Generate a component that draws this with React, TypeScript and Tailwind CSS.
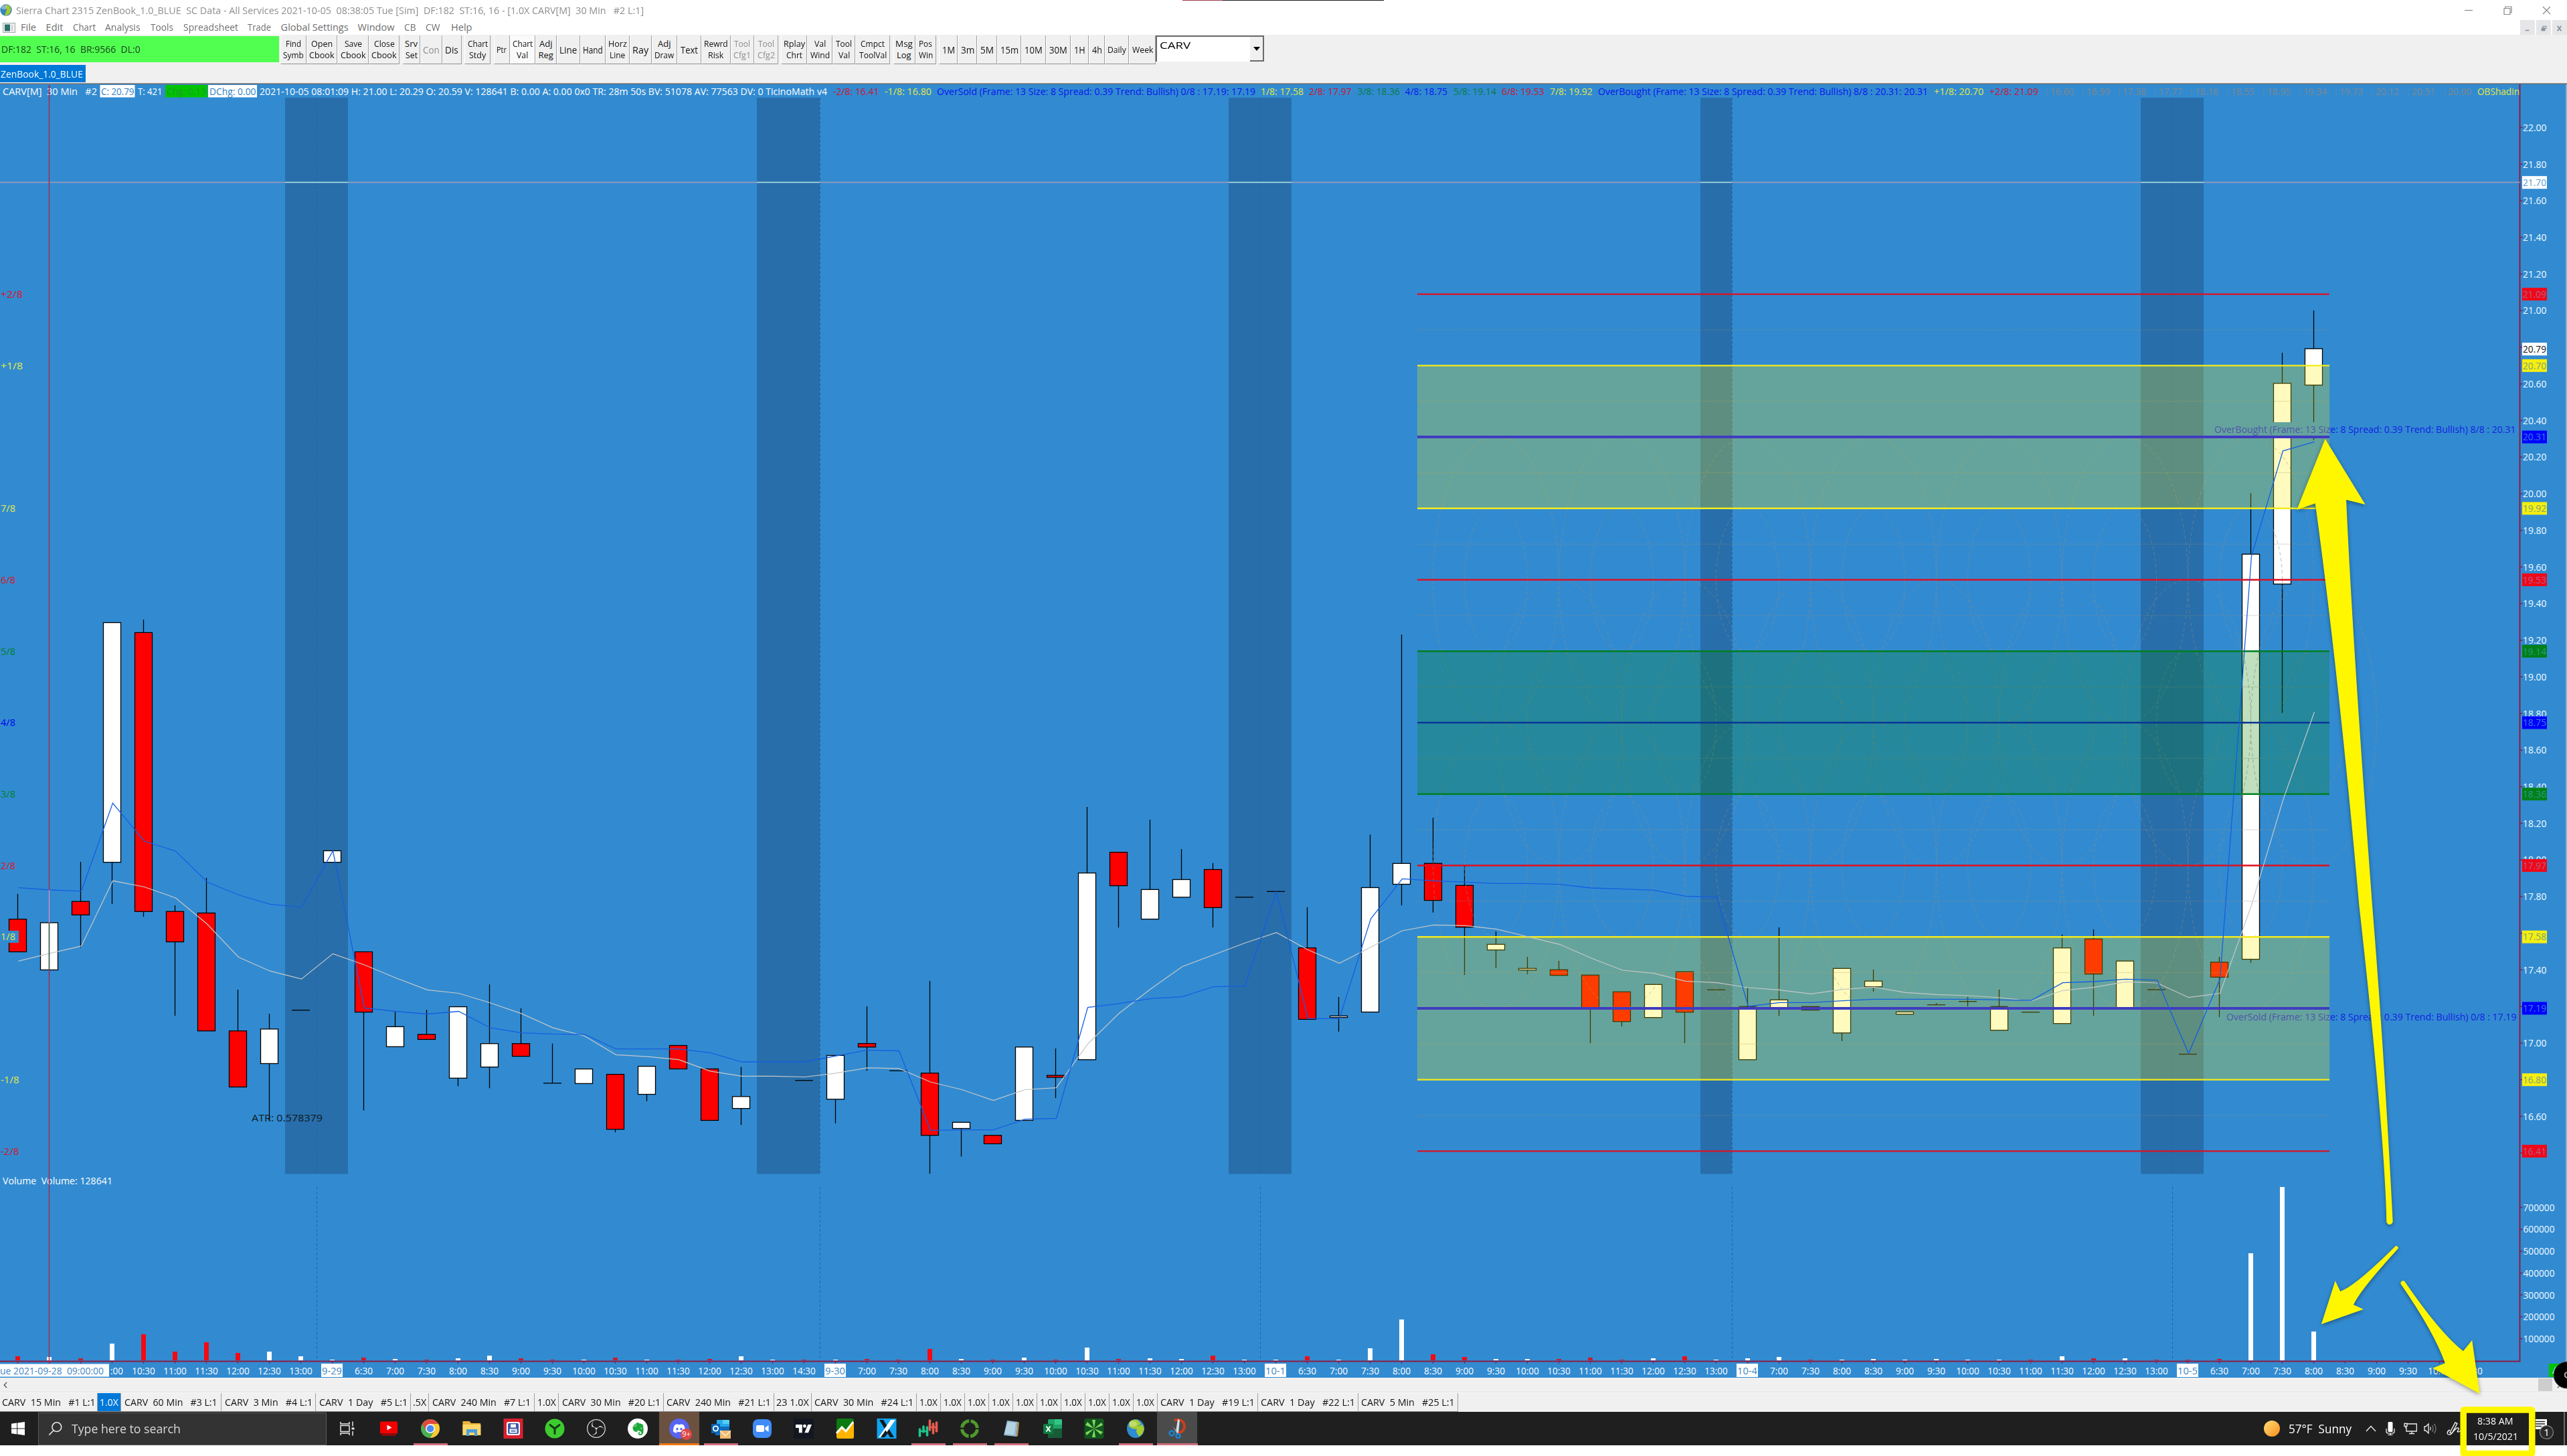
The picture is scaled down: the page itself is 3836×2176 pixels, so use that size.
import React, { useLayoutEffect, useRef, useState } from "react";
import { SiDiscord, SiEvernote, SiObsstudio, SiTradingview } from "react-icons/si";

/* ---------- text squeezed to a given width ---------- */
function Fit({ w, children, className = "" }: { w: number; children: string; className?: string }) {
  const ref = useRef<HTMLSpanElement>(null);
  const [scale, setScale] = useState(1);
  useLayoutEffect(() => {
    if (ref.current) setScale(w / ref.current.offsetWidth);
  }, [w, children]);
  return (
    <span className={`inline-block shrink-0 whitespace-pre ${className}`} style={{ width: w }}>
      <span ref={ref} className="inline-block origin-left" style={{ transform: `scaleX(${scale})` }}>
        {children}
      </span>
    </span>
  );
}

/* ---------- chart geometry ---------- */
const bx = (i: number) => 26.5 + 47 * i;
const py = (p: number) => 409.5 + (21.2 - p) * 273.67;
const BG = "#328bd1";
const X0 = 2118;
const X1 = 3481;

// bar index, high, body top, body bottom, low, kind (w = up, r = down, d = flat)
type Candle = [number, number, number, number, number, "w" | "r" | "d"];
const candles: Candle[] = [
  [0, 1336, 1373.7, 1422.5, 1422.5, "r"], [1, 1379, 1379, 1449.5, 1449.5, "w"], [2, 1288, 1347.3, 1367.4, 1416, "r"],
  [3, 930.5, 930.5, 1288.7, 1351, "w"], [4, 926, 945.4, 1362.2, 1370, "r"], [5, 1353, 1362.2, 1407.6, 1518, "r"],
  [6, 1312, 1364.5, 1540.7, 1540.7, "r"], [7, 1479, 1540.7, 1624.5, 1624.5, "r"], [8, 1515, 1537.9, 1589.5, 1675, "w"],
  [9, 1509.7, 1509.7, 1509.7, 1509.7, "d"], [10, 1271.5, 1271.5, 1288.7, 1288.7, "w"], [11, 1422.5, 1422.5, 1512.6, 1659.6, "r"],
  [12, 1512, 1534.4, 1564.3, 1564.3, "w"], [13, 1509, 1545.9, 1553.4, 1553.4, "r"], [14, 1504.6, 1504.6, 1611.3, 1623.4, "w"],
  [15, 1471.3, 1559.7, 1594.7, 1626.3, "w"], [16, 1507, 1559.7, 1578.6, 1578.6, "r"], [17, 1559.7, 1618.8, 1618.8, 1618.8, "d"],
  [18, 1597.6, 1597.6, 1619.4, 1619.4, "w"], [19, 1605.6, 1605.6, 1687.7, 1692.3, "r"], [20, 1593.6, 1593.6, 1635.5, 1645.8, "w"],
  [21, 1562.5, 1562.5, 1597.5, 1597.5, "r"], [22, 1597.5, 1597.5, 1674.4, 1674.4, "r"], [23, 1594.6, 1638.8, 1656.6, 1681.3, "w"],
  [25, 1614.7, 1614.7, 1614.7, 1614.7, "d"], [26, 1577.4, 1577.4, 1642.8, 1679, "w"], [27, 1504, 1559.6, 1564.8, 1600.3, "r"],
  [28, 1600.3, 1600.3, 1600.3, 1600.3, "d"], [29, 1466, 1603.8, 1696.8, 1754.2, "r"], [30, 1677.3, 1677.3, 1686.5, 1728.4, "w"],
  [31, 1696.8, 1696.8, 1709.4, 1709.4, "r"], [32, 1564.8, 1564.8, 1674.4, 1674.4, "w"], [33, 1567, 1607.2, 1610.1, 1641, "r"],
  [34, 1206, 1304.7, 1583.7, 1583.7, "w"], [35, 1273.7, 1273.7, 1323.7, 1386.2, "r"], [36, 1225, 1329.4, 1373.6, 1373.6, "w"],
  [37, 1269, 1314.5, 1340.9, 1340.9, "w"], [38, 1289.8, 1299.5, 1356.4, 1386.2, "r"], [39, 1340.9, 1340.9, 1340.9, 1340.9, "d"],
  [40, 1332.3, 1332.3, 1332.3, 1332.3, "d"], [41, 1355.8, 1416.6, 1523.4, 1523.4, "r"], [42, 1490, 1518.3, 1520.6, 1541.8, "w"],
  [43, 1247.3, 1326.5, 1512.5, 1512.5, "w"], [44, 948.2, 1290.4, 1321.5, 1353, "w"], [45, 1222, 1290.3, 1345.7, 1363.7, "r"],
  [46, 1293.3, 1323.3, 1385.7, 1457, "r"], [47, 1392, 1411.3, 1419.7, 1447, "w"], [48, 1430, 1447.3, 1449.7, 1456, "w"],
  [49, 1436, 1449.3, 1457.7, 1457.7, "r"], [50, 1457.3, 1457.3, 1506, 1559, "r"], [51, 1482.3, 1482.3, 1526.7, 1534, "r"],
  [52, 1471.3, 1471.3, 1520.7, 1520.7, "w"], [53, 1452.3, 1452.3, 1512.7, 1559, "r"], [54, 1479.3, 1479.3, 1479.3, 1479.3, "d"],
  [55, 1476.7, 1504.3, 1583.7, 1583.7, "w"], [56, 1386, 1494.3, 1506, 1518, "w"], [57, 1504, 1504.3, 1509.5, 1509.5, "r"],
  [58, 1447.3, 1447.3, 1543.7, 1556, "w"], [59, 1449, 1466.3, 1474.7, 1482, "w"], [60, 1512.3, 1512.3, 1515.7, 1515.7, "w"],
  [61, 1499, 1501.7, 1501.7, 1501.7, "d"], [62, 1490, 1496.7, 1496.7, 1504, "d"], [63, 1479, 1504.3, 1539.7, 1539.7, "w"],
  [64, 1512.7, 1512.7, 1512.7, 1512.7, "d"], [65, 1396.7, 1416.7, 1529.7, 1529.7, "w"], [66, 1389, 1403.3, 1455.7, 1518, "r"],
  [67, 1436.3, 1436.3, 1506, 1506, "w"], [68, 1479.1, 1479.1, 1479.1, 1479.1, "d"], [69, 1575.5, 1575.5, 1575.5, 1575.5, "d"],
  [70, 1430, 1438, 1460.4, 1520.2, "r"], [71, 737, 828.2, 1433.6, 1439, "w"], [72, 527.3, 572.9, 872.9, 1065.7, "w"],
  [73, 464, 521.1, 575.5, 657.7, "w"],
];

const fastAvg = [
  1326.6, 1330, 1331.8, 1200.3, 1257, 1272, 1318, 1337.5, 1351.3, 1355.9, 1271.5, 1506.3, 1511.5, 1515.5, 1511.5, 1536, 1543.6,
  1545.3, 1545.9, 1567.7, 1567.7, 1567.6, 1573.4, 1587, 1587, 1587, 1578, 1569.3, 1570.5, 1689.3, 1688.7, 1688.7, 1672.7, 1671.5,
  1505.6, 1499.9, 1492.4, 1489.6, 1474.6, 1473.5, 1332.8, 1522.3, 1522.3, 1373, 1313.3, 1316.3, 1318.3, 1320.3, 1320.3, 1321.7,
  1327, 1328.7, 1330.3, 1339.3, 1340.7, 1504, 1498.3, 1498.3, 1495.7, 1493.3, 1493.3, 1493.3, 1493.3, 1494.3, 1495, 1468.7, 1467,
  1463.3, 1464.8, 1574.6, 1463, 831, 673.8, 660.4,
];
const slowAvg = [
  1436.3, 1424.8, 1413.9, 1316.3, 1325.5, 1342, 1381, 1430.5, 1451.2, 1463.2, 1425.4, 1442, 1461.5, 1479.3, 1484.5, 1498.8, 1514.9,
  1536.1, 1548.2, 1576.3, 1579.2, 1583.7, 1600.9, 1608.4, 1608.4, 1609.5, 1603.8, 1595.8, 1596.9, 1617, 1628.5, 1644.5, 1628.5,
  1625.6, 1560.2, 1514.2, 1478.1, 1444.8, 1427, 1409.2, 1393.7, 1419.5, 1439.6, 1415.5, 1391, 1382.3, 1383.3, 1388.7, 1400, 1411.3,
  1431.7, 1450, 1454.7, 1466.3, 1468.7, 1476, 1479.7, 1485.3, 1478.7, 1475.3, 1483.3, 1486.3, 1488, 1491, 1496, 1480.3, 1475.3,
  1467.3, 1469, 1490.7, 1484.5, 1353, 1196, 1064,
];
const line = (ys: number[]) => ys.map((y, i) => `${bx(i) + 1},${y}`).join(" ");

// height of each volume bar in pixels; a minus sign marks a down bar
const volumes = [
  -6, 5, -3, 25, -39, -13, -27, -11, 13, 6, 1, -4, 2, -1, 3, 7, -3, -1, 1, -4, 1, -1, -2, 6, 1, -1, 1, -2, -1, -17, 2, -1, 4, -1,
  19, -2, 3, 2, -7, 1, 1, -6, 1, 18, 61, -9, -5, 2, 2, -2, -4, -1, 3, -6, 1, 3, 5, -1, 1, 2, 1, 2, 1, 1, -1, 6, -3, 3, -1, -1, -2,
  160, 259, 43,
];

const times = (
  ":00 10:30 11:00 11:30 12:00 12:30 13:00 9-29 6:30 7:00 7:30 8:00 8:30 9:00 9:30 10:00 10:30 11:00 11:30 12:00 12:30 13:00 14:30 " +
  "9-30 7:00 7:30 8:00 8:30 9:00 9:30 10:00 10:30 11:00 11:30 12:00 12:30 13:00 10-1 6:30 7:00 7:30 8:00 8:30 9:00 9:30 10:00 10:30 " +
  "11:00 11:30 12:00 12:30 13:00 10-4 7:00 7:30 8:00 8:30 9:00 9:30 10:00 10:30 11:00 11:30 12:00 12:30 13:00 10-5 6:30 7:00 7:30 8:00 " +
  "8:30 9:00 9:30 10:00 10:30"
).split(" ");

const RED = "#d2112c";
const YEL = "#e6e83c";
const GRN = "#0a7a45";
const BLU = "#0a14ee";
const info: [string, number, number, string][] = [
  ["CARV[M]  30 Min   #2", 4, 145, "#fff"], ["C: 20.79", 151, 200.5, "#2f7fc4"], ["T: 421", 206, 242.5, "#fff"],
  ["Chg: 0.13", 249, 308, "#1d9a2d"], ["DChg: 0.00", 313, 382.5, "#2f7fc4"],
  ["2021-10-05 08:01:09 H: 21.00 L: 20.29 O: 20.59 V: 128641 B: 0.00 A: 0.00 0x0 TR: 28m 50s BV: 51078 AV: 77563 DV: 0 TicinoMath v4", 388, 1236, "#fff"],
  ["-2/8: 16.41", 1245, 1313.5, RED], ["-1/8: 16.80", 1322, 1392, YEL],
  ["OverSold (Frame: 13 Size: 8 Spread: 0.39 Trend: Bullish) 0/8 : 17.19: 17.19", 1400, 1876, BLU],
  ["1/8: 17.58", 1884, 1948, YEL], ["2/8: 17.97", 1956, 2019.6, RED], ["3/8: 18.36", 2028.6, 2092, GRN],
  ["4/8: 18.75", 2099.6, 2163, BLU], ["5/8: 19.14", 2172, 2236, GRN], ["6/8: 19.53", 2244, 2307.8, RED], ["7/8: 19.92", 2316, 2379.6, YEL],
  ["OverBought (Frame: 13 Size: 8 Spread: 0.39 Trend: Bullish) 8/8 : 20.31: 20.31", 2388, 2881, BLU],
  ["+1/8: 20.70", 2890, 2964.3, YEL], ["+2/8: 21.09", 2973, 3046, RED],
  ...["16.60", "16.99", "17.38", "17.77", "18.16", "18.55", "18.95", "19.34", "19.73", "20.12", "20.51", "20.90"].map(
    (t, i): [string, number, number, string] => [": " + t, 3056.4 + 54 * i, 3099 + 54 * i, "#80868c"],
  ),
  ["OBShadin", 3702, 3765, YEL],
];

const levels: [string, number, string][] = [
  ["+2/8", 21.09, "#e00f1e"], ["+1/8", 20.7, "#f2ea20"], ["7/8", 19.92, "#f2ea20"], ["6/8", 19.53, "#d81226"], ["5/8", 19.14, "#008028"],
  ["4/8", 18.75, "#0a1ec8"], ["3/8", 18.36, "#008028"], ["2/8", 17.97, "#e00f1e"], ["1/8", 17.58, "#f2ea20"], ["-1/8", 16.8, "#f2ea20"],
  ["-2/8", 16.41, "#d81226"],
];
const boxes: [number, string, string][] = [
  [21.7, "#ffffff", "#5a9bd0"], [21.09, "#f00818", "#b0608c"], [20.79, "#ffffff", "#111111"], [20.7, "#f6ee10", "#74a37c"],
  [20.31, "#0000ff", "#3a7fe0"], [19.92, "#f6ee10", "#74a37c"], [19.53, "#f00818", "#b0608c"], [19.14, "#008018", "#2b9a86"],
  [18.75, "#0000ff", "#3a7fe0"], [18.36, "#008018", "#2b9a86"], [17.97, "#f00818", "#b0608c"], [17.58, "#f6ee10", "#74a37c"],
  [17.19, "#0000ff", "#3a7fe0"], [16.8, "#f6ee10", "#74a37c"], [16.41, "#f00818", "#b0608c"],
];
// grid prices whose label lies wholly behind a marker
const hidden = ["20.80", "17.60", "17.20", "16.80"];

function T({ x, y, w, fill, children, anchor = "start", size = 15 }: { x: number; y: number; w: number; fill: string; children: string; anchor?: "start" | "middle"; size?: number }) {
  return (
    <text x={x} y={y + size * 0.35} textLength={w} lengthAdjust="spacingAndGlyphs" fill={fill} textAnchor={anchor} fontSize={size} className="whitespace-pre">
      {children}
    </text>
  );
}

function Chart() {
  const bands: [number, number][] = [[426, 520], [1131, 1225], [1836, 1930], [2541, 2588], [3199, 3293]];
  const sessions = [473, 1225, 1883, 2588, 3246];
  return (
    <svg viewBox="0 126 3836 1933" width={3836} height={1933} className="block shrink-0">
      <rect x={0} y={126} width={3836} height={1933} fill={BG} />
      {bands.map(([a, b]) => (
        <rect key={a} x={a} y={146} width={b - a} height={1608.5} fill="#286eaa" />
      ))}
      {sessions.map((x) => (
        <g key={x} stroke="#1f66a4" strokeWidth={1} strokeDasharray="4 3">
          <line x1={x + 0.5} x2={x + 0.5} y1={146} y2={1754} />
          <line x1={x + 0.5} x2={x + 0.5} y1={1774} y2={2033} />
        </g>
      ))}

      {/* candles */}
      {candles.map(([i, h, t, b, l, k]) => (
        <g key={i} stroke="#000" strokeWidth={1.3}>
          {h < t && <line x1={bx(i)} x2={bx(i)} y1={h} y2={t} />}
          {l > b && <line x1={bx(i)} x2={bx(i)} y1={b} y2={l} />}
          {k === "d" ? (
            <line x1={bx(i) - 13.5} x2={bx(i) + 13.5} y1={t} y2={t} />
          ) : (
            <rect x={bx(i) - 13} y={t} width={26} height={b - t} fill={k === "w" ? "#fff" : "#ff0000"} />
          )}
        </g>
      ))}

      {/* mid levels and arcs */}
      <g stroke="#8a8a80" strokeWidth={1} fill="none">
        {Array.from({ length: 12 }, (_, i) => (
          <line key={i} x1={X0} x2={X1} y1={py(16.605 + 0.39 * i)} y2={py(16.605 + 0.39 * i)} strokeDasharray="1 1" opacity={0.7} />
        ))}
        <g opacity={0.6} strokeDasharray="5 4">
          {[47, 51, 55, 59, 63, 67, 71].map((i) => (
            <g key={i}>
              {[19.53, 17.97].map((p) => (
                <g key={p}>
                  <ellipse cx={bx(i)} cy={py(p)} rx={47} ry={106.7} />
                  <ellipse cx={bx(i)} cy={py(p)} rx={94} ry={213.4} />
                </g>
              ))}
              <ellipse cx={bx(i + 2)} cy={py(18.75)} rx={47} ry={106.7} />
              <ellipse cx={bx(i + 2)} cy={py(18.75)} rx={94} ry={213.4} />
            </g>
          ))}
        </g>
      </g>

      {/* level lines */}
      {levels.map(([n, p, c]) => (
        <line key={n} x1={X0} x2={X1} y1={py(p)} y2={py(p)} stroke={c} strokeWidth={2.4} />
      ))}
      <rect x={3307} y={631} width={454} height={20} fill={BG} />
      <rect x={3326} y={1510} width={436} height={19} fill={BG} />
      {[20.31, 17.19].map((p) => (
        <line key={p} x1={X0} x2={X1} y1={py(p)} y2={py(p)} stroke="#0000ff" strokeWidth={4} />
      ))}
      <T x={3309} y={641.5} w={450.5} fill="#1420e4">OverBought (Frame: 13 Size: 8 Spread: 0.39 Trend: Bullish) 8/8 : 20.31</T>
      <T x={3327} y={1519.5} w={433.5} fill="#1420e4">OverSold (Frame: 13 Size: 8 Spread: 0.39 Trend: Bullish) 0/8 : 17.19</T>

      {/* zones */}
      <rect x={X0} y={py(20.7)} width={X1 - X0} height={py(19.92) - py(20.7)} fill="#fff000" opacity={0.25} />
      <rect x={X0} y={py(17.58)} width={X1 - X0} height={py(16.8) - py(17.58)} fill="#fff000" opacity={0.25} />
      <rect x={X0} y={py(19.14)} width={X1 - X0} height={py(18.36) - py(19.14)} fill="#008000" opacity={0.25} />

      {/* averages */}
      <polyline points={line(slowAvg)} fill="none" stroke="#c4c8c8" strokeWidth={1.2} />
      <polyline points={line(fastAvg)} fill="none" stroke="#155fe0" strokeWidth={1.3} />

      {/* level names */}
      <rect x={0} y={1391} width={28} height={18} fill={BG} />
      {levels.map(([n, p, c]) => (
        <T key={n} x={1} y={py(p)} w={n.length === 3 ? 22 : n[0] === "-" ? 27.5 : 33} fill={c === "#f2ea20" ? "#e2ea48" : c === "#0a1ec8" ? "#0000f0" : c}>{n}</T>
      ))}
      <T x={376} y={1670.5} w={106} fill="#101820">ATR: 0.578379</T>
      <T x={4} y={1765} w={164} fill="#ffffff">{"Volume  Volume: 128641"}</T>

      {/* volume */}
      {volumes.map((v, i) => (
        <rect key={i} x={bx(i) - 3.5} y={2033 - Math.abs(v)} width={7} height={Math.abs(v)} fill={v < 0 ? (v < -4 ? "#f40a12" : "#c81c30") : "#fff"} />
      ))}
      <path d="M0 2034.5 H3765.5 V126" fill="none" stroke="#8c1c44" strokeWidth={2} />
      {Array.from({ length: 79 }, (_, i) => (
        <line key={i} x1={bx(i)} x2={bx(i)} y1={2034} y2={2038} stroke="#8c1c44" strokeWidth={1.2} />
      ))}

      {/* crosshair */}
      <line x1={0} x2={3766} y1={272.5} y2={272.5} stroke="#a99ab8" strokeWidth={1.3} />
      {bands.map(([a, b]) => (
        <line key={a} x1={a} x2={b} y1={272.5} y2={272.5} stroke="#9adfe8" strokeWidth={1.5} />
      ))}
      <line x1={73.5} x2={73.5} y1={127} y2={2038} stroke="#a8264c" strokeWidth={1.4} />
      <line x1={73.5} x2={73.5} y1={1330} y2={1379} stroke="#b8a0e0" strokeWidth={1.4} />
      <line x1={73.5} x2={73.5} y1={1380} y2={1449} stroke="#1f6a50" strokeWidth={1.4} />

      {/* time scale */}
      {times.map((t, k) => {
        const i = k + 3;
        const x = bx(i);
        if (t.includes("-")) {
          return (
            <g key={i}>
              <rect x={x - 16.5} y={2038} width={32} height={20} fill="#fff" />
              <T x={x - 0.5} y={2048.7} w={30} fill="#3f86c8" anchor="middle">{t}</T>
            </g>
          );
        }
        if (t === ":00") return <T key={i} x={165} y={2048.7} w={19} fill="#fff">{t}</T>;
        return <T key={i} x={x} y={2048.7} w={t.length === 5 ? 34.5 : 27} fill="#fff" anchor="middle">{t}</T>;
      })}
      <rect x={0} y={2038.5} width={163} height={19} fill="#fff" />
      <T x={0} y={2048.7} w={155} fill="#3f86c8">{"ue 2021-09-28  09:00:00"}</T>

      {/* price scale */}
      {Array.from({ length: 29 }, (_, k) => 22 - 0.2 * k).map((p) => (
        <g key={p}>
          <line x1={3766} x2={3769.5} y1={py(p)} y2={py(p)} stroke="#8c1c44" strokeWidth={1.5} />
          {p > 16.5 && !hidden.includes(p.toFixed(2)) && <T x={3770} y={py(p)} w={35.5} fill="#f4fbff">{p.toFixed(2)}</T>}
        </g>
      ))}
      {boxes.map(([p, c, t]) => (
        <g key={p}>
          <rect x={3769} y={py(p) - 9.5} width={37} height={19} fill={c} />
          <T x={3770} y={py(p)} w={35} fill={t}>{p.toFixed(2)}</T>
        </g>
      ))}
      {[7, 6, 5, 4, 3, 2, 1].map((n) => (
        <g key={n}>
          <line x1={3766} x2={3769.5} y1={2033.4 - 32.7 * n} y2={2033.4 - 32.7 * n} stroke="#8c1c44" strokeWidth={1.5} />
          <T x={3770.5} y={2033.4 - 32.7 * n} w={47} fill="#f4fbff">{`${n}00000`}</T>
        </g>
      ))}
      <line x1={3835} x2={3835} y1={126} y2={2059} stroke="#a8bccc" strokeWidth={1.5} />

      {/* study values */}
      <rect x={149.5} y={127} width={52} height={18.5} fill="#fff" />
      <rect x={247} y={127} width={63} height={18.5} fill="#00c400" />
      <rect x={311} y={127} width={73} height={18.5} fill="#fff" />
      {info.map(([t, a, b, c]) => (
        <T key={a} x={a} y={137} w={b - a} fill={c}>{t}</T>
      ))}
      <line x1={73.5} x2={73.5} y1={127} y2={146} stroke="#a8264c" strokeWidth={1.4} />

      <rect x={3809} y={2038} width={25} height={20} fill="#00c400" />
      <T x={3814} y={2048} w={10} fill="#fff">A</T>
    </svg>
  );
}

/* ---------- window chrome ---------- */
const menu: [string, number, number][] = [
  ["File", 23, 37.6], ["Edit", 26, 40], ["Chart", 34, 48], ["Analysis", 53, 68], ["Tools", 34, 49], ["Spreadsheet", 82, 96.5], ["Trade", 35, 49.5],
  ["Global Settings", 101, 115], ["Window", 55, 69.5], ["CB", 18, 32], ["CW", 22, 38], ["Help", 31, 40],
];

// label lines, button width
type Btn = [string, number];
const groups: Btn[][] = [
  [["Find|Symb", 39], ["Open|Cbook", 46], ["Save|Cbook", 47], ["Close|Cbook", 46]],
  [["Srv|Set", 26], ["Con", 33], ["Dis", 29]],
  [["Chart|Stdy", 39]],
  [["Ptr", 24], ["Chart|Val", 38], ["Adj|Reg", 32], ["Line", 35], ["Hand", 38], ["Horz|Line", 36], ["Ray", 33], ["Adj|Draw", 38], ["Text", 36], ["Rewrd|Risk", 44], ["Tool|Cfg1", 35], ["Tool|Cfg2", 36]],
  [["Rplay|Chrt", 39], ["Val|Wind", 38], ["Tool|Val", 34], ["Cmpct|ToolVal", 52]],
  [["Msg|Log", 33], ["Pos|Win", 31]],
  [["1M", 28], ["3m", 29], ["5M", 30], ["15m", 36], ["10M", 37], ["30M", 37], ["1H", 27], ["4h", 24], ["Daily", 36], ["Week", 40]],
];
const textW: Record<string, number> = {
  Find: 23, Symb: 31, Open: 32, Cbook: 38, Save: 26, Close: 31, Srv: 19, Set: 18, Con: 25, Dis: 20, Chart: 30, Stdy: 25, Ptr: 15, Val: 17, Adj: 19, Reg: 22,
  Line: 26, Hand: 30, Horz: 28, Ray: 24, Draw: 29, Text: 26, Rewrd: 36, Risk: 23, Tool: 24, Cfg1: 26, Cfg2: 26, Rplay: 32, Chrt: 24, Wind: 29, Cmpct: 36,
  ToolVal: 41, Msg: 26, Log: 22, Pos: 20, Win: 21, "1M": 19, "3m": 20, "5M": 20, "15m": 27, "10M": 27, "30M": 27, "1H": 17, "4h": 15, Daily: 28, Week: 31,
};

function ToolButton({ label, w }: { label: string; w: number }) {
  const lines = label.split("|");
  const off = label === "Con" || label.includes("Cfg");
  const down = label === "Chart|Val";
  return (
    <div
      className={`flex h-[43px] shrink-0 flex-col items-center justify-center border-r border-b border-l border-r-[#a0a0a0] border-b-[#909090] border-l-white ${down ? "bg-[#fafafa]" : "bg-[#f0f0f0]"} ${off ? "text-[#8c8c8c]" : "text-[#111]"}`}
      style={{ width: w }}
    >
      {lines.map((l) => (
        <Fit key={l} w={label === "Horz|Line" && l === "Line" ? 23 : textW[l]} className={lines.length === 2 || l === "Daily" || l === "Week" || l === "Ptr" ? "text-[13px] leading-[17px]" : "text-[15px] leading-[18px]"}>
          {l}
        </Fit>
      ))}
    </div>
  );
}

const tabs: [string, number, number][] = [
  ["CARV  15 Min   #1 L:1", 146, 140], ["1.0X", 35, 28], ["CARV  60 Min   #3 L:1", 150, 139], ["CARV  3 Min   #4 L:1", 141, 131],
  ["CARV  1 Day   #5 L:1", 142, 132], [".5X", 27, 20], ["CARV  240 Min   #7 L:1", 158, 147], ["1.0X", 36, 28], ["CARV  30 Min   #20 L:1", 157, 147],
  ["CARV  240 Min   #21 L:1", 165, 156], ["23 1.0X", 56, 49], ["CARV  30 Min   #24 L:1", 157, 148],
  ...Array.from({ length: 10 }, (): [string, number, number] => ["1.0X", 36, 27]),
  ["CARV  1 Day   #19 L:1", 150, 141], ["CARV  1 Day   #22 L:1", 150, 141], ["CARV  5 Min   #25 L:1", 149, 140],
];

/* ---------- taskbar icons (30 x 30) ---------- */
const Svg = ({ children }: { children: React.ReactNode }) => (
  <svg viewBox="0 0 30 30" className="size-[30px]">{children}</svg>
);
const icons: { el: React.ReactNode; cell?: string; bar?: string }[] = [
  { el: <Svg><g fill="none" stroke="#e8e8e8" strokeWidth={1.5}><path d="M5 5v3h13V5M5 25v-3h13v3M5 10.500h13v9H5zM23 4.500v7M23 19v6.500" /></g><path d="M21.500 13.500h4v3h-4z" fill="#e8e8e8" /></Svg> },
  { el: <Svg><rect x={2} y={4.500} width={26} height={18} rx={1.500} fill="#f40000" /><rect x={4} y={23.500} width={22} height={2} rx={1} fill="#c00000" /><path d="M12.500 9.500l7 4-7 4z" fill="#fff" /></Svg> },
  {
    el: (
      <Svg>
        <circle cx={15} cy={15} r={14} fill="#4caf50" />
        <path d="M15 15L2.900 8A14 14 0 0 1 27.100 8z" fill="#e04a3f" />
        <path d="M15 8h12.100A14 14 0 0 1 15 29l6-10.500z" fill="#fcc934" />
        <path d="M2.900 8L9 18.500 15 15V8z" fill="#e04a3f" />
        <circle cx={15} cy={15} r={7} fill="#f4f4f4" /><circle cx={15} cy={15} r={5.300} fill="#4a8af4" />
      </Svg>
    ),
    bar: "w-[51px] bg-[#d0707c]",
  },
  { el: <Svg><path d="M1.500 4h10l2.500 3h14v18H1.500z" fill="#e8b33a" /><path d="M1.500 9h27v16h-27z" fill="#fbd768" /><path d="M7 26V16h16v10h-4v-5h-8v5z" fill="#4aa0dc" /></Svg> },
  { el: <Svg><rect x={.5} width={29} height={30} fill="#d8202e" /><rect x={5} y={5} width={20} height={20} rx={3} fill="#fff" /><rect x={7} y={7} width={16} height={16} rx={2} fill="#3a58a8" /><path d="M11 8.500h8v5h-8zM9.500 15.500h11v6h-11z" fill="#fff" /><path d="M11.500 17h7v1h-7zM11.500 19h7v1h-7z" fill="#3a58a8" /></Svg> },
  { el: <Svg><circle cx={15} cy={15} r={14.500} fill="#3ecb30" /><path d="M8 9.500l7 5.500v7.500M15 15l7-5.500" fill="none" stroke="#143c14" strokeWidth={3} strokeLinecap="round" /></Svg> },
  { el: <SiObsstudio className="size-[28px] text-[#d8d8d8]" /> },
  { el: <div className="flex size-[30px] items-center justify-center rounded-full bg-white"><SiEvernote className="size-[19px] text-[#1ca838]" /></div> },
  {
    el: (
      <div className="relative flex size-[30px] items-center justify-center rounded-full bg-[#5865f2]">
        <SiDiscord className="size-[18px] text-white" />
        <span className="absolute -right-1 -bottom-0.5 flex size-[17px] items-center justify-center rounded-full bg-[#e04848] text-[11px] text-white">9+</span>
      </div>
    ),
    cell: "bg-[#6b5140]",
    bar: "w-[60px] bg-[#f07814]",
  },
  {
    el: (
      <Svg>
        <path d="M9 2h19v11H9z" fill="#28a8ea" /><path d="M18 2h10v6H18z" fill="#50d0f8" /><path d="M7 12h21v13H7z" fill="#0f6cbd" />
        <path d="M1 8h13v14H1z" fill="#0a64b8" /><circle cx={7.500} cy={15} r={3.600} fill="none" stroke="#fff" strokeWidth={1.800} />
        <path d="M14 18h16v12H14z" fill="#f2b96e" /><path d="M14 18l8 8 8-8" fill="none" stroke="#fff3df" strokeWidth={1.400} />
      </Svg>
    ),
    bar: "w-[51px] bg-[#d0707c]",
  },
  { el: <Svg><rect x={1} y={1} width={28} height={28} rx={8} fill="#3f8cf8" /><rect x={6} y={10} width={12} height={10} rx={2} fill="#fff" /><path d="M19.500 13.500l5-3.500v10l-5-3.500z" fill="#fff" /></Svg> },
  { el: <div className="flex size-[30px] items-center justify-center bg-[#131722]"><SiTradingview className="size-[24px] text-white" /></div> },
  { el: <Svg><rect x={2} width={26} height={30} rx={3} fill="#0b7a10" /><path d="M2 20l8-8 6 6L28 6v21a3 3 0 0 1-3 3H5a3 3 0 0 1-3-3z" fill="#ffb400" /><path d="M2 22l8-9 6 6L27 5" fill="none" stroke="#fff" strokeWidth={3} /></Svg> },
  { el: <Svg><rect x={.5} width={29} height={30} fill="#12a4f0" /><path d="M4 2h6l16 26h-6z" fill="#101820" /><path d="M21 2h7L10 28H3z" fill="#fff" /><path d="M13.500 17.500l3 5L12 28H6z" fill="#101820" /></Svg> },
  { el: <Svg><g stroke="#1fc48c" strokeWidth={3.600} strokeLinecap="round"><path d="M2.500 16v10M8 12v8M13.500 13v12" /></g><path d="M2.500 19h11" stroke="#1fc48c" strokeWidth={2.500} /><g stroke="#e85c50" strokeWidth={3.600} strokeLinecap="round"><path d="M17.500 3v14M22.500 8v14M27.500 6v13" /></g><path d="M18 13h10" stroke="#e85c50" strokeWidth={2.500} /></Svg>, bar: "w-[51px] bg-[#d0707c]" },
  { el: <Svg><circle cx={15} cy={15} r={11.500} fill="none" stroke="#4f9a2c" strokeWidth={5} strokeDasharray="15.500 2.560" strokeDashoffset={-1.300} /></Svg>, bar: "w-[51px] bg-[#d0707c]" },
  { el: <Svg><path d="M9 3l16 2-2 22L4 25z" fill="#8fb8cc" /><path d="M10 5l12 1.500-2.500 18L5 23z" fill="#b4d4e4" /><path d="M25 5l2 1-2 20-2 1z" fill="#c89040" /></Svg>, bar: "w-[51px] bg-[#d0707c]" },
  { el: <Svg><rect x={8} y={1} width={21} height={28} rx={2} fill="#21a366" /><path d="M18 1h9a2 2 0 0 1 2 2v6H18z" fill="#33c481" /><path d="M8 15h21v12a2 2 0 0 1-2 2H10a2 2 0 0 1-2-2z" fill="#185c37" /><rect x={1} y={8} width={15} height={15} rx={1.500} fill="#107c41" /><path d="M5.500 11.500l6 8M11.500 11.500l-6 8" stroke="#fff" strokeWidth={2} /></Svg> },
  { el: <Svg><rect x={.5} width={29} height={30} rx={3} fill="#12561c" /><path d="M15 15L12 2h5zM15 15l11-9 2 4zM15 15l13 5-3 4zM15 15l2 13h-5zM15 15L4 25l-2-4zM15 15L2 10l3-5z" fill="#7ed860" /></Svg> },
  { el: <Svg><ellipse cx={15} cy={15} rx={13} ry={14} fill="#2e8cd0" /><path d="M6 5c4-4 10-4 13-2l4 5-5 3-2 5-6-1-5-3zM17 12l8-3 3 6-3 8-5 4-4-7z" fill="#a8cc30" /><ellipse cx={11} cy={8} rx={6} ry={4} fill="#fff" opacity={.3} /></Svg>, bar: "w-[51px] bg-[#d0707c]" },
  { el: <Svg><path d="M11 3a10 10.500 0 0 1 15 8c0 6-4 10-9 10.500" fill="none" stroke="#c8401c" strokeWidth={4} /><path d="M13 20L16 1l3 1-2 20z" fill="#d8dce0" /><path d="M8 11l9 11-2 1z" fill="#a8b0b8" /><circle cx={7} cy={22} r={3.500} fill="none" stroke="#1c84d0" strokeWidth={2.500} /><circle cx={16.500} cy={26} r={3} fill="none" stroke="#1c84d0" strokeWidth={2.500} /></Svg>, cell: "bg-[#4b4b4b]", bar: "w-[61px] bg-[#d0707c]" },
];

function Taskbar() {
  return (
    <div className="flex h-[50px] items-center bg-[#1f1f1f] text-white">
      <div className="flex h-full w-[57px] items-center pl-[17px]">
        <svg viewBox="0 0 20 20" className="size-5 fill-white"><path d="M0 2.800l8.200-1.200v7.900H0zM9.200 1.400L20 0v9.500H9.200zM0 10.500h8.200v7.900L0 17.200zM9.200 10.500H20V20L9.200 18.600z" /></svg>
      </div>
      <div className="flex h-[49px] w-[431px] items-center border border-[#5a5a5a] bg-[#333333] pl-3.5">
        <svg viewBox="0 0 24 24" className="mr-[13px] size-[22px]" fill="none" stroke="#e8e8e8" strokeWidth={1.700}><circle cx={14} cy={9.500} r={7.500} /><path d="M8.800 15L1.500 22.500" /></svg>
        <Fit w={163} className="text-[19px] text-[#d8d8d8]">Type here to search</Fit>
      </div>
      {icons.map((ic, i) => (
        <div key={i} className="flex h-full w-[62px] shrink-0 flex-col items-center">
          <div className={`flex h-[47px] w-[60px] items-center justify-center pt-[3px] ${ic.cell ?? ""}`}>{ic.el}</div>
          <div className={`h-[3px] ${ic.bar ?? ""}`} />
        </div>
      ))}
      <div className="ml-auto flex h-full items-center">
        <div className="size-6 rounded-full bg-gradient-to-br from-[#ffe070] to-[#f88c10]" />
        <Fit w={94} className="ml-[13px] text-[18px]">{"57°F  Sunny"}</Fit>
        <svg viewBox="0 0 16 10" className="ml-[21px] h-[10px] w-4" fill="none" stroke="#eee" strokeWidth={1.400}><path d="M1 9l7-7.500L15 9" /></svg>
        <svg viewBox="0 0 14 20" className="ml-[14px] h-5 w-[14px]"><rect x={3.500} width={7} height={15} rx={1.500} fill="#fff" /><path d="M1 10v4.500q0 2.500 3 2.500h6q3 0 3-2.500V10M7 17v2.500M3.500 19.500h7" fill="none" stroke="#fff" strokeWidth={1.200} /></svg>
        <svg viewBox="0 0 20 18" className="ml-[13px] h-[18px] w-5" fill="none" stroke="#eee" strokeWidth={1.300}><path d="M5 2h14.300v11H4V7M12 13v3.500M8 16.500h8M1 1.500h4v4H1zM3 5.500v3" /></svg>
        <svg viewBox="0 0 20 18" className="ml-[10px] h-[18px] w-5" fill="none" stroke="#eee" strokeWidth={1.300}><path d="M1 6v6h2l4 4V2L3 6zM9.500 6.500q1.500 2.500 0 5" /><path d="M12.500 4q3 5 0 10M15.500 2q5 7 0 14" stroke="#777" /></svg>
        <svg viewBox="0 0 22 22" className="ml-[14px] h-[22px] w-[22px]" fill="none" stroke="#eee" strokeWidth={1.400}><path d="M5 17L13 2l3 1.500L8 18zM5 13c-6 3-4 8 0 7s8-11 12-10-3 6 0 6 4-2 4-2" /></svg>
        <div className="ml-[5px] flex w-[92px] flex-col items-center text-[15px] leading-[23px]">
          <Fit w={54}>8:38 AM</Fit>
          <Fit w={67}>10/5/2021</Fit>
        </div>
        <svg viewBox="0 0 28 34" className="ml-[14px] h-[34px] w-7">
          <path d="M0 3h17v15H12l-4 4v-4H0z" fill="#fff" /><path d="M0 6.500h14M0 10h14M0 13.500h9" stroke="#222" strokeWidth={1.500} />
          <circle cx={16.500} cy={22.500} r={10} fill="#2b2b2b" stroke="#8a8a8a" strokeWidth={1.200} />
          <text x={16.500} y={28} fontSize={15} textAnchor="middle" fill="#fff">1</text>
        </svg>
        <div className="ml-[14px] h-full w-[2px] bg-[#6a6a6a]" />
        <div className="w-[3px]" />
      </div>
    </div>
  );
}

function Annotations() {
  return (
    <svg viewBox="0 0 3836 2176" className="pointer-events-none absolute top-0 left-0 h-[2176px] w-[3836px]">
      <g fill="#fff700" className="drop-shadow-[0_2px_3px_rgba(0,0,0,0.4)]">
        <path d="M3474.600 656L3534.600 754L3506.100 747Q3515 950 3545 1353Q3562 1560 3575.600 1824A4.700 5 0 0 1 3566.300 1826Q3564 1700 3525.400 1353Q3495 1010 3459.800 752.300L3432.200 762Z" />
        <path d="M3468.900 1979L3489.700 1914.300L3497.300 1930Q3520 1922 3579.500 1862.500A2.900 2.900 0 0 1 3583.600 1866Q3527 1928 3517 1950L3532 1956.700Z" />
        <path d="M3705.500 2082.700L3635 2044.700L3653.800 2037.300Q3638 1992 3588 1919.500A3.400 3.400 0 0 1 3594 1916Q3647 1993 3680.900 2019.300L3694.200 2003Z" />
      </g>
      <rect x={3681.200} y={2107} width={102.600} height={65.500} rx={1} fill="none" stroke="#fff700" strokeWidth={9.500} />
      <circle cx={3836} cy={2055} r={20} fill="#000" stroke="#55606a" strokeWidth={1} />
      <path d="M3836 2051q-4 1-3 5q0 2 3 3" fill="none" stroke="#aaa" strokeWidth={2} />
    </svg>
  );
}

export default function App() {
  return (
    <div className="relative flex h-[2176px] w-[3836px] flex-col overflow-hidden bg-white font-['Open_Sans',sans-serif]">
      {/* title bar */}
      <div className="flex h-[30px] items-center justify-between">
        <div className="flex items-center">
          <svg viewBox="0 0 18 18" className="mr-[6px] size-[18px]"><circle cx={9} cy={9} r={8.700} fill="#3a86b8" /><path d="M8 1c6 0 9 4 8 9s-5 8-9 7l3-8z" fill="#a8c830" /><ellipse cx={6} cy={5} rx={4} ry={3} fill="#fff" opacity={.4} /></svg>
          <Fit w={938} className="text-[15px] text-[#8e8e8e]">{"Sierra Chart 2315 ZenBook_1.0_BLUE  SC Data - All Services 2021-10-05  08:38:05 Tue [Sim]  DF:182  ST:16, 16 - [1.0X CARV[M]  30 Min   #2 L:1]"}</Fit>
        </div>
        <div className="flex items-center gap-[45px] pr-6 pt-px">
          <svg viewBox="0 0 13 13" className="size-[13px]" stroke="#888" strokeWidth={1.200}><path d="M0 6.500h12" /></svg>
          <svg viewBox="0 0 13 13" className="size-[13px]" fill="none" stroke="#888" strokeWidth={1.200}><path d="M1 3.500h9v9H1zM3 3.500V1h9v9h-2" /></svg>
          <svg viewBox="0 0 13 13" className="size-[13px]" stroke="#888" strokeWidth={1.200}><path d="M1 1l11 11M12 1L1 12" /></svg>
        </div>
      </div>
      <div className="absolute top-0 left-[1767px] flex h-px w-[301px] bg-[#1c1c20]"><div className="w-[60px] bg-[#9c3c44]" /></div>

      {/* menu bar */}
      <div className="flex h-[22px] items-center">
        <svg viewBox="0 0 19 15" className="mr-2 ml-1 h-[15px] w-[19px]"><rect x={.5} y={.5} width={18} height={14} fill="#f0f0f0" stroke="#9aa" /><rect x={3} y={2.500} width={8} height={10} fill="#2f6f6c" /><path d="M14 3v9" stroke="#a8a8a8" /></svg>
        {menu.map(([t, w, step]) => (
          <div key={t} className="shrink-0 text-[14.5px] text-[#6e6e6e]" style={{ width: step }}><Fit w={w}>{t}</Fit></div>
        ))}
        <div className="ml-auto flex h-full gap-[2px]">
          {["M3 12h6v-1.500H3z", "M5 4h6v5H9v3H3V7h2zM6 5v2h3v1h1V5z", "M3 4l6 8M9 4l-6 8"].map((d) => (
            <div key={d} className="flex w-[22px] items-center justify-center bg-[#e6e6e8]">
              <svg viewBox="0 0 14 14" className="size-[13px]" fill="#8c949c" fillRule="evenodd" stroke="#8c949c" strokeWidth={d.includes("l6 8") ? 2 : 0.2}><path d={d} /></svg>
            </div>
          ))}
        </div>
      </div>

      {/* toolbar */}
      <div className="flex h-[45px] shrink-0 items-start bg-[#f0f0f0] pt-px">
        <div className="mt-px flex h-[39px] w-[417px] shrink-0 items-center bg-[#50ff50] pl-0.5">
          <Fit w={208} className="text-[15px] text-[#1a3a1a]">{"DF:182  ST:16, 16  BR:9566  DL:0"}</Fit>
        </div>
        <div className="ml-[2px] flex gap-[4.500px]">
          {groups.map((g, i) => (
            <div key={i} className="flex">
              {g.map(([l, w], k) => (
                <ToolButton key={k} label={l} w={w} />
              ))}
            </div>
          ))}
        </div>
        <div className="flex h-[39px] w-[162px] border-t-2 border-l-2 border-[#6a6a6a] bg-white">
          <Fit w={46} className="grow pt-px pl-1 text-[15px] leading-[23px] text-black">CARV</Fit>
          <div className="flex w-[21px] shrink-0 items-center justify-center border-r-2 border-b-2 border-[#6a6a6a] bg-[#f0f0f0]">
            <svg viewBox="0 0 10 6" className="h-[6px] w-[10px]"><path d="M0 0h10L5 6z" /></svg>
          </div>
        </div>
      </div>

      {/* chartbook tab */}
      <div className="flex h-[27px] shrink-0 items-start bg-[#f0f0f0]">
        <div className="flex h-[26px] w-[128px] items-center bg-[#0078d7] pl-px"><Fit w={123} className="text-[15px] text-white">ZenBook_1.0_BLUE</Fit></div>
      </div>
      <div className="h-[2px] shrink-0 border-t border-[#a0a0a0] bg-[#606a72]" />

      <Chart />

      {/* scroll bar */}
      <div className="flex h-[22px] shrink-0 items-center border-b border-[#dcdcdc] bg-[#f0f0f0]">
        <svg viewBox="0 0 8 12" className="ml-1 h-[10px] w-2" fill="none" stroke="#505050" strokeWidth={1.600}><path d="M6.500 1L2 6l4.500 5" /></svg>
        <div className="ml-auto h-[19px] w-[21px] bg-[#cdcdcd]" />
        <svg viewBox="0 0 8 12" className="mr-2 ml-1.5 h-[10px] w-2" fill="none" stroke="#505050" strokeWidth={1.600}><path d="M1.500 1L6 6l-4.500 5" /></svg>
      </div>

      {/* chart tabs */}
      <div className="flex h-[29px] shrink-0 items-stretch border-t border-white bg-[#f0f0f0]">
        {tabs.map(([t, w, tw], i) => (
          <div
            key={i}
            className={`flex shrink-0 items-center justify-center border-r border-b border-r-[#a0a0a0] border-b-[#909090] ${i === 1 ? "bg-[#0078d7] text-white" : "text-[#111]"}`}
            style={{ width: w }}
          >
            <Fit w={tw} className="text-[15px]">{t}</Fit>
          </div>
        ))}
      </div>

      <Taskbar />
      <Annotations />
    </div>
  );
}
